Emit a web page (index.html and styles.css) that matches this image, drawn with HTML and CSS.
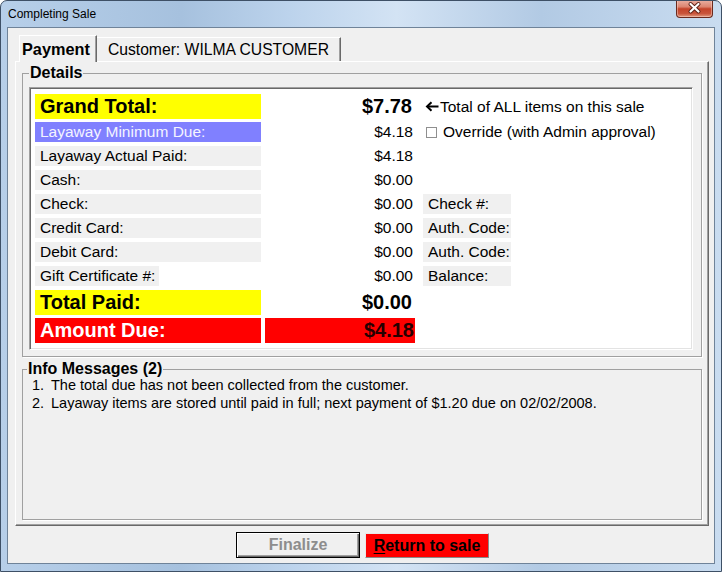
FILE: index.html
```html
<!DOCTYPE html>
<html>
<head>
<meta charset="utf-8">
<link rel="stylesheet" href="styles.css">
</head>
<body>
<div class="window">
  <div class="titlebar">
    <span class="title">Completing Sale</span>
    <div class="close">
      <svg width="37" height="18" viewBox="0 0 37 18">
        <path d="M14.5 5 L22.5 12.5 M22.5 5 L14.5 12.5" stroke="#5a1e14" stroke-width="4" stroke-linecap="round" fill="none"/>
        <path d="M14.5 5 L22.5 12.5 M22.5 5 L14.5 12.5" stroke="#ffffff" stroke-width="2.2" stroke-linecap="round" fill="none"/>
      </svg>
    </div>
  </div>
  <div class="client">
    <div class="tabs">
      <div class="tab active">Payment</div>
      <div class="tab">Customer: WILMA CUSTOMER</div>
    </div>
    <div class="panel">
      <fieldset class="group details">
        <legend>Details</legend>
        <div class="sheet">
          <div class="row big">
            <div class="lbl yellow">Grand Total:</div>
            <div class="val">$7.78</div>
            <div class="extra note">
              <svg class="arrow" width="14" height="11" viewBox="0 0 14 11"><path d="M13.5 5.5H3" stroke="#000" stroke-width="2"/><path d="M6.5 1.2L2 5.5L6.5 9.8" fill="none" stroke="#000" stroke-width="2"/></svg>Total of ALL items on this sale
            </div>
          </div>
          <div class="row after-big">
            <div class="lbl blue">Layaway Minimum Due:</div>
            <div class="val">$4.18</div>
            <div class="extra"><span class="check"></span>Override (with Admin approval)</div>
          </div>
          <div class="row">
            <div class="lbl gray">Layaway Actual Paid:</div>
            <div class="val">$4.18</div>
          </div>
          <div class="row">
            <div class="lbl gray">Cash:</div>
            <div class="val">$0.00</div>
          </div>
          <div class="row">
            <div class="lbl gray">Check:</div>
            <div class="val">$0.00</div>
            <div class="extra"><span class="field">Check #:</span></div>
          </div>
          <div class="row">
            <div class="lbl gray">Credit Card:</div>
            <div class="val">$0.00</div>
            <div class="extra"><span class="field">Auth. Code:</span></div>
          </div>
          <div class="row">
            <div class="lbl gray">Debit Card:</div>
            <div class="val">$0.00</div>
            <div class="extra"><span class="field">Auth. Code:</span></div>
          </div>
          <div class="row">
            <div class="lbl"><span class="fit">Gift Certificate #:</span></div>
            <div class="val">$0.00</div>
            <div class="extra"><span class="field">Balance:</span></div>
          </div>
          <div class="row big paid">
            <div class="lbl yellow">Total Paid:</div>
            <div class="val">$0.00</div>
          </div>
          <div class="row big">
            <div class="lbl red">Amount Due:</div>
            <div class="val redval">$4.18</div>
          </div>
        </div>
      </fieldset>
      <fieldset class="group info">
        <legend>Info Messages (2)</legend>
        <ol class="msgs">
          <li><span class="num">1.</span>The total due has not been collected from the customer.</li>
          <li><span class="num">2.</span>Layaway items are stored until paid in full; next payment of $1.20 due on 02/02/2008.</li>
        </ol>
      </fieldset>
    </div>
    <div class="buttons">
      <div class="btn finalize">Finalize</div>
      <div class="btn return"><u>R</u>eturn to sale</div>
    </div>
  </div>
</div>
</body>
</html>
```
FILE: styles.css
```css
html, body {
  margin: 0;
  padding: 0;
  background: #ffffff;
}

.window {
  width: 722px;
  height: 572px;
  box-sizing: border-box;
  border: 1px solid #3e5066;
  border-radius: 7px 7px 0 0;
  background: linear-gradient(to right, #b7cfe9 0%, #a6c1de 25%, #bcd3ec 40%, #d3e3f4 55%, #b2cae4 75%, #c9dcf0 100%);
  display: flex;
  flex-direction: column;
  font-family: "Liberation Sans", Arial, sans-serif;
  overflow: hidden;
}

.titlebar {
  height: 26px;
  flex: none;
  display: flex;
  align-items: center;
  padding: 0 8px 0 7px;
}

.title {
  font-size: 12px;
  color: #000;
}

.close {
  margin-left: auto;
  align-self: flex-start;
  margin-top: -1px;
  width: 37px;
  height: 18px;
  box-sizing: border-box;
  border: 1px solid #6a2a1e;
  border-top: none;
  border-radius: 0 0 4px 4px;
  background: linear-gradient(#eab0a3 0%, #dc8570 40%, #c4432a 52%, #c9553b 80%, #e09a80 100%);
  box-shadow: inset 0 0 0 1px rgba(255, 220, 210, 0.45);
}

.close svg {
  display: block;
  margin: -1px 0 0 -1px;
}

.client {
  flex: 1;
  margin: 0 6px 7px 6px;
  border: 1px solid #6f8399;
  background: #f0f0f0;
  display: flex;
  flex-direction: column;
  padding: 7px 5px 0 7px;
  min-height: 0;
}

.tabs {
  height: 26px;
  display: flex;
  align-items: flex-end;
  padding-left: 4px;
  position: relative;
  z-index: 1;
}

.tab {
  box-sizing: border-box;
  height: 24px;
  line-height: 23px;
  font-size: 15.7px;
  color: #000;
  background: #f0f0f0;
  border-top: 1px solid #ffffff;
  border-right: 1px solid #696969;
  padding: 0 11px 0 11px;
  box-shadow: inset -1px 0 0 #a0a0a0;
}

.tab.active {
  height: 27px;
  line-height: 26px;
  margin-bottom: -1px;
  font-weight: bold;
  font-size: 16.3px;
  border-left: 1px solid #ffffff;
  padding: 0 6px 0 2px;
}

.panel {
  height: 465px;
  box-sizing: border-box;
  border-top: 1px solid #ffffff;
  border-left: 1px solid #ffffff;
  border-right: 1px solid #696969;
  border-bottom: 1px solid #696969;
  box-shadow: inset -1px -1px 0 #a0a0a0;
  padding: 2px 6px 5px 6px;
  display: flex;
  flex-direction: column;
}

.group {
  margin: 0;
  border: 1px solid #a0a0a0;
  box-shadow: 1px 1px 0 #ffffff;
  min-width: 0;
}

.group legend {
  font-weight: bold;
  font-size: 16px;
  line-height: 18px;
  padding: 0 1px;
  color: #000;
}

.details {
  padding: 5px 8px 6px 6px;
}

.sheet {
  height: 263px;
  box-sizing: border-box;
  background: #ffffff;
  border-top: 1px solid #a0a0a0;
  border-left: 1px solid #a0a0a0;
  border-right: 1px solid #ffffff;
  border-bottom: 1px solid #ffffff;
  box-shadow: inset 1px 1px 0 #696969, inset -1px -1px 0 #e3e3e3;
  padding: 6px 0 0 5px;
  display: flex;
  flex-direction: column;
  gap: 4px;
}

.row {
  display: flex;
  height: 20px;
  line-height: 20px;
  font-size: 15.5px;
  color: #000;
}

.row.big {
  height: 25px;
  line-height: 25px;
  margin-bottom: -1px;
}

.lbl {
  width: 226px;
  box-sizing: border-box;
  padding-left: 5px;
  white-space: nowrap;
}

.big .lbl {
  font-weight: bold;
  font-size: 20px;
}

.yellow { background: #ffff00; }
.blue { background: #8080ff; color: #f4f4ff; }
.gray { background: #f0f0f0; }
.red { background: #ff0000; color: #ffffff; }

.fit {
  display: inline-block;
  background: #f0f0f0;
  padding: 0 4px 0 5px;
  margin-left: -5px;
}

.val {
  width: 150px;
  margin-left: 4px;
  box-sizing: border-box;
  text-align: right;
  padding-right: 2px;
}

.big .val {
  font-weight: bold;
  font-size: 20px;
  padding-right: 3px;
}

.redval {
  background: #ff0000;
  color: #260000;
  padding-right: 1px !important;
}

.extra {
  margin-left: 8px;
  display: flex;
  align-items: center;
  white-space: nowrap;
}

.note {
  font-size: 15.5px;
  font-weight: normal;
}

.arrow {
  margin: 0 1px 0 2px;
  flex: none;
}

.check {
  width: 11px;
  height: 11px;
  box-sizing: border-box;
  border: 1px solid #8f8f8f;
  background: #ffffff;
  margin: 0 6px 0 3px;
  flex: none;
}

.field {
  display: block;
  width: 88px;
  height: 20px;
  box-sizing: border-box;
  background: #f0f0f0;
  padding-left: 5px;
}

.info {
  flex: 1;
  margin-top: 3px;
  padding: 0 4px 0 4px;
}

.msgs {
  list-style: none;
  margin: -2px 0 0 5px;
  padding: 0;
  font-size: 14.5px;
  line-height: 18px;
  color: #000;
}

.num {
  display: inline-block;
  width: 19px;
}

.buttons {
  display: flex;
  justify-content: center;
  align-items: flex-start;
  gap: 5px;
  margin-top: 6px;
  padding-left: 1px;
}

.btn {
  width: 124px;
  box-sizing: border-box;
  text-align: center;
  font-weight: bold;
  font-size: 16px;
}

.finalize {
  height: 26px;
  line-height: 24px;
  border: 1px solid #000000;
  background: #f0f0f0;
  color: #8d8d8d;
  box-shadow: inset 1px 1px 0 #ffffff, inset -1px -1px 0 #696969, inset -2px -2px 0 #a0a0a0;
}

.return {
  height: 25px;
  line-height: 23px;
  margin-top: 1px;
  background: #ff0000;
  color: #000000;
  border: 1px solid;
  border-color: #e8e8e8 #8a8a8a #8a8a8a #e8e8e8;
}

.return u {
  text-decoration-thickness: 1px;
  text-underline-offset: 2px;
}
```
